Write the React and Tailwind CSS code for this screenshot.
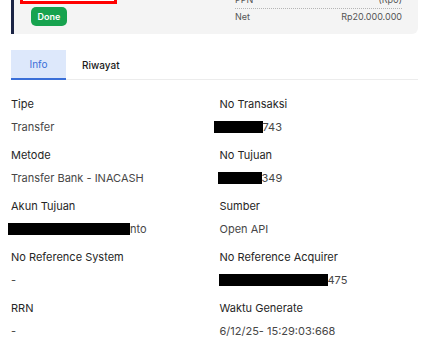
import React from "react";

const font = { fontFamily: "Inter, 'Noto Sans', sans-serif" };

function Redact({ w }) {
  return <span className="inline-block h-[12px] bg-black align-middle" style={{ width: w }} />;
}

function Field({ label, children }) {
  return (
    <div className="flex flex-col">
      <div className="h-[16px] leading-[16px] text-[11px] text-[#262626]">{label}</div>
      <div className="mt-[7px] h-[16px] leading-[16px] text-[11px] text-[#474747] flex items-center">{children}</div>
    </div>
  );
}

export default function App() {
  return (
    <div className="w-[426px] h-[341px] overflow-hidden bg-white" style={font}>
      <div className="px-[11px] pr-[8px]">
        {/* Summary card */}
        <div className="-mt-[24px] flex bg-[#f4f4f4] border-l-[3px] border-[#1b2445] rounded-br-[6px] pb-[8px]">
          <div className="flex flex-col pl-[6px]">
            <div className="w-[97px] h-[28px] border-[3px] border-[#ff0000] bg-white" />
            <div className="mt-[3px] ml-[11px] w-[36px] h-[19px] rounded-[5px] bg-[#17a34f] text-white text-[9px] font-semibold flex items-center justify-center">
              Done
            </div>
          </div>
          <div className="ml-auto mr-[16px] w-[167px] pt-[18px] flex flex-col text-[9px] text-[#555]">
            <div className="flex justify-between h-[12px] leading-[12px]">
              <span>PPN</span>
              <span>(Rp0)</span>
            </div>
            <div className="mt-[2px] border-t border-dotted border-[#b5b5b5]" />
            <div className="mt-[2px] flex justify-between h-[12px] leading-[12px]">
              <span>Net</span>
              <span>Rp20.000.000</span>
            </div>
          </div>
        </div>

        {/* Tabs */}
        <div className="mt-[16px] flex h-[30px] border-b border-[#ececec]">
          <div className="w-[55px] h-[30px] bg-[#dde8fb] border-b-2 border-[#3a6fd8] flex items-center justify-center text-[10px] text-[#3a6fd8]">
            Info
          </div>
          <div className="px-[16px] h-[30px] flex items-center text-[10px] font-medium text-[#1a1a1a]">
            Riwayat
          </div>
        </div>

        {/* Fields */}
        <div className="mt-[16px] grid grid-cols-2 gap-x-[10px] gap-y-[12px]">
          <Field label="Tipe">Transfer</Field>
          <Field label="No Transaksi">
            <span className="-ml-[6px] flex items-center"><Redact w={49} />743</span>
          </Field>
          <Field label="Metode">Transfer Bank - INACASH</Field>
          <Field label="No Tujuan">
            <span className="-ml-[2px] flex items-center"><Redact w={44} />349</span>
          </Field>
          <Field label="Akun Tujuan">
            <span className="-ml-[3px] flex items-center"><Redact w={122} />nto</span>
          </Field>
          <Field label="Sumber">Open API</Field>
          <Field label="No Reference System">-</Field>
          <Field label="No Reference Acquirer">
            <span className="-ml-[1px] flex items-center"><Redact w={109} />475</span>
          </Field>
          <Field label="RRN">-</Field>
          <Field label="Waktu Generate">6/12/25- 15:29:03:668</Field>
        </div>
      </div>
    </div>
  );
}
